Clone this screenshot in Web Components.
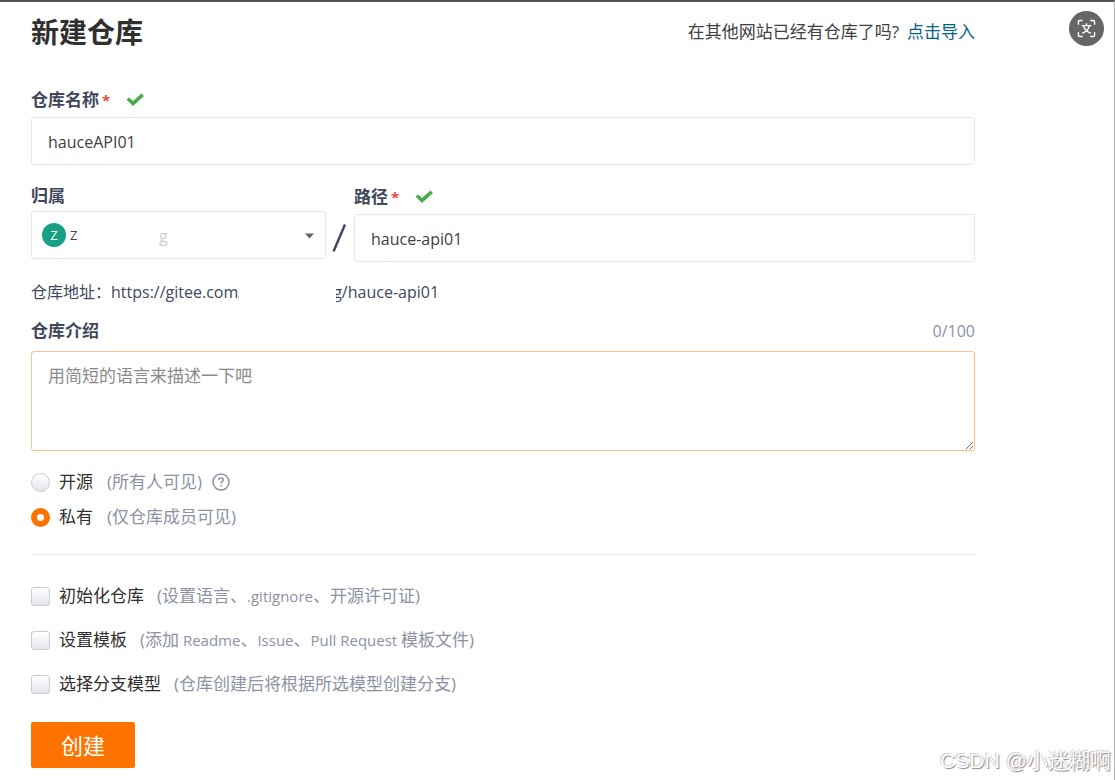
<!DOCTYPE html>
<html lang="zh-CN">
<head>
<meta charset="utf-8">
<meta name="viewport" content="width=device-width, initial-scale=1">
<title>新建仓库</title>
<style>
body{margin:0;background:#fff;color:#40485b;font:17px/24px "Open Sans","Noto Sans CJK SC",sans-serif}
</style>
</head>
<body>
<repo-page></repo-page>
<script>
const BASE = '*,:host{box-sizing:border-box}';
function define(name, html, setup) {
  customElements.define(name, class extends HTMLElement {
    constructor() {
      super();
      this.attachShadow({mode: 'open'});
    }
    connectedCallback() {
      this.shadowRoot.innerHTML = html;
      if (setup) setup(this, this.shadowRoot);
    }
  });
}

define('page-header', `<style>${BASE}
:host{display:flex;justify-content:space-between;align-items:center;height:40px}
h1{margin:0;font-size:28px;line-height:40px;font-weight:700;color:#303030}
p{margin:0;color:#404040}
a{color:#056285;text-decoration:none;margin-left:8px}
</style><h1>新建仓库</h1><p>在其他网站已经有仓库了吗?<a href="#import">点击导入</a></p>`);

define('field-label', `<style>${BASE}
:host{display:flex;align-items:center;height:24px;font-weight:700;color:#40485b}
.star{color:#f5483b;margin-left:3px;font-size:15px}
svg{margin-left:16px}
:host(:not([required])) .star,:host(:not([required])) svg{display:none}
</style><slot></slot><span class="star">*</span>
<svg width="18" height="14" viewBox="0 0 18 14" aria-hidden="true"><path d="M0.500 6.500L3 4.500 7 8 15.500 0.500 18 3 7 13z" fill="#45ae4b"/></svg>`);

define('text-field', `<style>${BASE}
:host{display:block}
label{display:block;margin-bottom:5px}
input{display:block;width:100%;height:48px;padding:2px 16px 0;border:1px solid #e3e6ec;border-radius:3px;background:#fff;font:inherit;font-size:16px;color:#404040;outline:0}
</style><label for="box"><field-label required></field-label></label><input id="box" type="text">`,
(host, root) => {
  root.querySelector('field-label').textContent = host.getAttribute('label');
  root.querySelector('input').value = host.getAttribute('value');
});

define('owner-select', `<style>${BASE}
:host{display:block}
label{display:block;margin-bottom:3px}
.box{position:relative}
select{display:block;appearance:none;width:100%;height:48px;padding:0 30px 0 38px;border:1px solid #e3e6ec;border-radius:3px;background:#fff;color:#40485b;font:inherit;font-size:13px;outline:0}
.avatar,.arrow,.tail{position:absolute;pointer-events:none}
.avatar{left:11px;top:12px;width:24px;height:24px;border-radius:50%;background:#17a085;color:#fff;font-size:13px;text-align:center}
.arrow{right:12px;top:22px}
.tail{left:128px;top:13px;font-size:16px;line-height:24px;color:#c9ccd4}
</style><label for="owner"><field-label>归属</field-label></label>
<div class="box"><select id="owner"><option>Z</option></select><span class="avatar">Z</span><span class="tail">g</span>
<svg class="arrow" width="9" height="6" viewBox="0 0 9 6" aria-hidden="true"><path d="M0 0.500h9L4.500 5.500z" fill="#5c6475"/></svg></div>`);

define('repo-location', `<style>${BASE}
:host{display:grid;grid-template-columns:minmax(0,295px) 28px minmax(0,1fr);align-items:start}
text-field{padding-top:1px}
svg{margin:40px 0 0 5px}
</style><owner-select></owner-select>
<svg width="16" height="28" viewBox="0 0 16 28" aria-hidden="true"><path d="M2.500 27.500L14 0.500" stroke="#40485b" stroke-width="2.400"/></svg>
<text-field label="路径" value="hauce-api01"></text-field>`);

define('repo-address', `<style>${BASE}
:host{display:flex;height:24px;color:#40485b;font-size:16px}
.gap{position:relative;width:97px;margin:0 -3px 0 -5px;background:#fff}
</style><span>仓库地址：</span><span>https://gitee.com/</span><span class="gap"></span><span>g/hauce-api01</span>`);

define('repo-intro', `<style>${BASE}
:host{display:block}
.head{display:flex;justify-content:space-between;margin-bottom:8px}
output{color:#8c92a4;font-size:16px}
textarea{display:block;width:100%;height:100px;padding:12px 16px;border:1px solid #ffc08a;border-radius:3px;font:inherit;color:#404040;outline:0;resize:vertical}
textarea::placeholder{color:#8a8a8a}
</style><div class="head"><label for="intro"><field-label>仓库介绍</field-label></label><output for="intro">0/100</output></div>
<textarea id="intro" maxlength="100" placeholder="用简短的语言来描述一下吧"></textarea>`,
(host, root) => {
  const area = root.querySelector('textarea');
  area.addEventListener('input', () => { root.querySelector('output').value = area.value.length + '/100'; });
});

define('repo-visibility', `<style>${BASE}
:host{display:grid;gap:11px}
div{display:flex;align-items:center;height:24px}
input{appearance:none;flex:none;width:19px;height:19px;margin:0 9px 0 0;border:1px solid #c9ccd2;border-radius:50%;background:linear-gradient(#fff,#e3e6ec)}
input:checked{border:6px solid #fe7300;background:#fff}
label{color:#303030}
.hint{color:#8c92a4;margin-left:14px}
svg{margin-left:10px}
</style>
<div><input type="radio" name="vis" id="open"><label for="open">开源<span class="hint">(所有人可见)</span></label>
<svg width="18" height="18" viewBox="0 0 18 18" fill="none" stroke="#8c92a4" stroke-width="1.500" aria-hidden="true"><circle cx="9" cy="9" r="8"/><path d="M6.700 7.300C6.700 5.800 7.600 5 9 5s2.300.8 2.300 2c0 1.500-2.200 1.700-2.200 3.600M9.100 12v1.600"/></svg></div>
<div><input type="radio" name="vis" id="private" checked><label for="private">私有<span class="hint">(仅仓库成员可见)</span></label></div>`);

define('check-option', `<style>${BASE}
:host{display:flex;align-items:center;height:24px}
input{appearance:none;flex:none;width:19px;height:19px;margin:0 9px 0 0;border:1px solid #c9ccd2;border-radius:3px;background:linear-gradient(#fff,#e3e6ec)}
input:checked{background:#fe7300}
label{color:#303030}
.hint{color:#8c92a4;margin-left:13px}
</style><input type="checkbox" id="box"><label for="box"><slot></slot><span class="hint"><slot name="hint"></slot></span></label>`);

define('translate-button', `<style>${BASE}
:host{display:block}
button{display:grid;place-items:center;width:35px;height:35px;padding:0;border:0;border-radius:50%;background:#666}
</style><button type="button" aria-label="翻译"><svg width="19" height="19" viewBox="0 0 20 20" fill="none" stroke="#fff" stroke-width="1.500" aria-hidden="true"><path d="M1.500 6V3q0-1.500 1.500-1.500h3M14 1.500h3q1.500 0 1.500 1.500v3M18.500 14v3q0 1.500-1.500 1.500h-3M6 18.500H3q-1.500 0-1.500-1.500v-3M5 7h10M10 4.500V7M7 7.500c1 3.500 3.500 6 7.500 7.500M13 7.500c-1 3.500-3.500 6-7.500 7.500"/></svg></button>`);

define('repo-page', `<style>${BASE}
:host{display:block;position:relative;min-height:100vh;border-top:2px solid #555;border-right:1px solid #b4b4b4;padding:10px 139px 8px 31px}
page-header{margin-bottom:36px}
form{display:block}
.name{margin-bottom:19px}
repo-location{margin-bottom:18px}
repo-address{margin-bottom:15px}
repo-intro{margin-bottom:19px}
hr{height:1px;margin:25px 0 29px;border:0;background:#e3e8ed}
.options{display:grid;gap:20px;margin-bottom:26px}
.latin{font-size:15px}
.submit{display:block;width:104px;height:46px;padding:0;border:0;border-radius:2px;background:#fe7300;color:#fff;font:inherit;font-size:22px;line-height:40px}
translate-button{position:absolute;top:9px;right:10px}
.mark{position:absolute;right:3px;bottom:4px;margin:0;color:#fff;font:21px/30px "Liberation Sans","Noto Sans CJK SC",sans-serif;text-shadow:1px 1px 1px #888,-1px -1px 1px #ccc}
</style>
<page-header></page-header>
<form>
<text-field class="name" label="仓库名称" value="hauceAPI01"></text-field>
<repo-location></repo-location>
<repo-address></repo-address>
<repo-intro></repo-intro>
<repo-visibility></repo-visibility>
<hr>
<div class="options">
<check-option>初始化仓库<span slot="hint">(设置语言、<span class="latin">.gitignore</span>、开源许可证)</span></check-option>
<check-option>设置模板<span slot="hint">(添加<span class="latin"> Readme</span>、<span class="latin">Issue</span>、<span class="latin">Pull Request </span>模板文件)</span></check-option>
<check-option>选择分支模型<span slot="hint">(仓库创建后将根据所选模型创建分支)</span></check-option>
</div>
<button class="submit" type="button">创建</button>
</form>
<translate-button></translate-button>
<p class="mark">CSDN @小迷糊啊</p>`);
</script>
</body>
</html>
